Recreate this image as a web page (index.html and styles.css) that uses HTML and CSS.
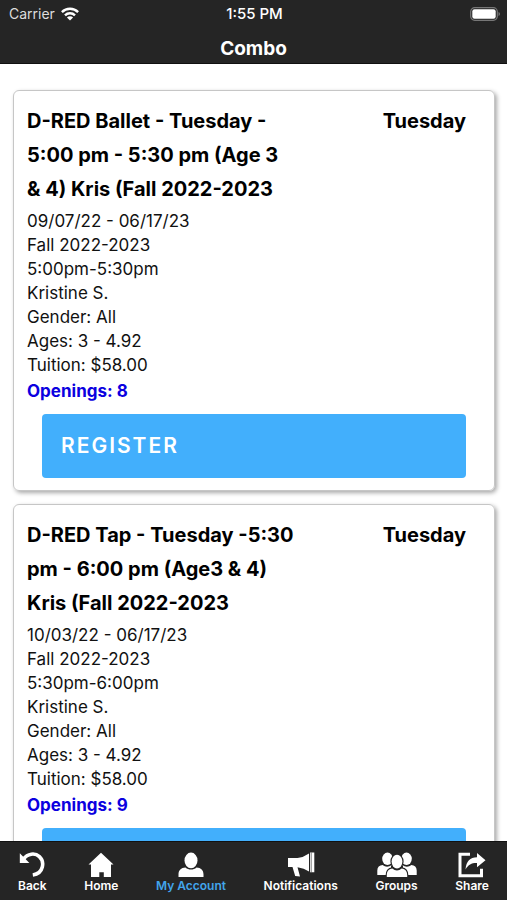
FILE: index.html
```html
<!DOCTYPE html>
<html lang="en">
<head>
<meta charset="utf-8">
<meta name="viewport" content="width=device-width, initial-scale=1">
<title>Combo</title>
<link rel="stylesheet" href="styles.css">
</head>
<body>
<header class="header">
  <div class="status">
    <div class="carrier">
      <span>Carrier</span>
      <svg width="18" height="14" viewBox="0 0 18 14" fill="none" stroke="#fff" stroke-width="2.4" aria-hidden="true">
        <path d="M.9 5.1a11.5 11.5 0 0 1 16.2 0M4 8.3a7 7 0 0 1 10 0"/>
        <path d="M9 13.6 5.9 10.5a4.4 4.4 0 0 1 6.2 0z" fill="#fff" stroke="none"/>
      </svg>
    </div>
    <time>1:55 PM</time>
    <svg class="battery" width="30" height="14" viewBox="0 0 30 14" aria-hidden="true">
      <rect x=".7" y=".7" width="26.6" height="12.6" rx="4" fill="none" stroke="#777" stroke-width="1.2"/>
      <rect x="2.3" y="2.3" width="23.4" height="9.4" rx="2.2" fill="#fff"/>
      <path d="M28.5 5q1.5.7 1.5 2t-1.500 2z" fill="#777"/>
    </svg>
  </div>
  <h1 class="title">Combo</h1>
</header>
<main class="list">
  <article class="card">
    <div class="card-head">
      <h2 class="name">D-RED Ballet - Tuesday - 5:00 pm - 5:30 pm (Age 3 &amp; 4) Kris (Fall 2022-2023</h2>
      <p class="day">Tuesday</p>
    </div>
    <ul class="details">
      <li>09/07/22 - 06/17/23</li>
      <li>Fall 2022-2023</li>
      <li>5:00pm-5:30pm</li>
      <li>Kristine S.</li>
      <li>Gender: All</li>
      <li>Ages: 3 - 4.92</li>
      <li>Tuition: $58.00</li>
      <li class="openings">Openings: 8</li>
    </ul>
    <button class="register" type="button">REGISTER</button>
  </article>
  <article class="card">
    <div class="card-head">
      <h2 class="name">D-RED Tap - Tuesday -5:30 pm - 6:00 pm (Age3 &amp; 4) Kris (Fall 2022-2023</h2>
      <p class="day">Tuesday</p>
    </div>
    <ul class="details">
      <li>10/03/22 - 06/17/23</li>
      <li>Fall 2022-2023</li>
      <li>5:30pm-6:00pm</li>
      <li>Kristine S.</li>
      <li>Gender: All</li>
      <li>Ages: 3 - 4.92</li>
      <li>Tuition: $58.00</li>
      <li class="openings">Openings: 9</li>
    </ul>
    <button class="register" type="button">REGISTER</button>
  </article>
</main>
<nav class="tabs" aria-label="Main">
  <a class="tab" href="#back">
    <svg width="26" height="26" viewBox="0 0 26 26" aria-hidden="true"><path d="M4.500 7.500C8.500 1.800 16 .9 20.400 5c5.300 4.900 4.600 16.800-6.600 18.400" transform="translate(0 -.4)" fill="none" stroke="#fff" stroke-width="3.600"/><path d="M.8 1.200v9.800h9.600z" fill="#fff"/></svg>
    <span>Back</span>
  </a>
  <a class="tab" href="#home">
    <svg width="26" height="26" viewBox="0 0 26 26" fill="#fff" aria-hidden="true"><path d="M13 .8 25.500 12.500h-2.500v12.500h-7.200v-4.800h-4.500V25H3V12.500H.5z"/></svg>
    <span>Home</span>
  </a>
  <a class="tab active" href="#account" aria-current="page">
    <svg width="26" height="26" viewBox="0 0 26 26" fill="#fff" aria-hidden="true"><ellipse cx="13" cy="8.400" rx="6.500" ry="7.800"/><path d="M.5 25v-2.500C.5 18 3 15.800 7.500 15.500c3 2.800 8 2.800 11 0 4.500.3 7 2.500 7 7V25z"/></svg>
    <span>My Account</span>
  </a>
  <a class="tab" href="#notifications">
    <svg width="28" height="26" viewBox="0 0 28 26" fill="#fff" aria-hidden="true"><path d="M1 6h9.500q6-.6 11.500-4.500v18Q17 16 10.500 15.200l2.500 9.300-4.800-.6L5.500 15H1zM23 .6h4.300v19.600H23z"/><path d="M24.200 .6v19.600" stroke="#252525" stroke-width=".6"/></svg>
    <span>Notifications</span>
  </a>
  <a class="tab" href="#groups">
    <svg width="40" height="26" viewBox="0 0 40 26" fill="#fff" aria-hidden="true"><g id="side"><ellipse cx="10.500" cy="6.800" rx="5.300" ry="6.200"/><path d="M.3 23v-4.500c0-3.500 2-5.300 5.500-5.600 2.500 2.300 6 2.300 8.700 0l5 2V23z"/></g><use href="#side" transform="matrix(-1 0 0 1 40 0)"/><path d="M14 14h12v5H14z" fill="#252525"/><g stroke="#252525" stroke-width="2.400" paint-order="stroke"><path d="M9.800 25v-1.500c0-4.500 2-6.500 5.500-7 3 2.500 6.400 2.500 9.400 0 3.500.5 5.500 2.500 5.500 7V25z"/><ellipse cx="20" cy="9.600" rx="5.400" ry="6.800"/></g></svg>
    <span>Groups</span>
  </a>
  <a class="tab" href="#share">
    <svg width="28" height="26" viewBox="0 0 28 26" aria-hidden="true"><path d="M12 2.200H2v21.600h21.500v-7" fill="none" stroke="#fff" stroke-width="3"/><path d="M7.500 17.500C8.300 9 12 5.500 19 5.200V1l8.500 7.200-8.500 7V11c-5.200-.2-8.500 1.500-11.500 6.500z" fill="#fff"/></svg>
    <span>Share</span>
  </a>
</nav>
</body>
</html>
```
FILE: styles.css
```css
* { box-sizing: border-box; }

body {
  display: flex;
  flex-direction: column;
  height: 100vh;
  margin: 0;
  background: #fff;
  color: #000;
  font-family: Inter, "Liberation Sans", sans-serif;
}

h1, h2, p, ul { margin: 0; padding: 0; }

.header {
  flex: none;
  background: #252525;
  color: #fff;
  border-bottom: 1px solid #111;
}

.status {
  display: grid;
  grid-template-columns: 1fr auto 1fr;
  align-items: center;
  height: 27px;
  padding: 0 7px 0 9px;
  font-size: 14px;
}

.status time {
  font-size: 15px;
  font-weight: 500;
}

.carrier {
  display: flex;
  align-items: center;
  gap: 6px;
  color: #ddd;
}

.battery { justify-self: end; }

.title {
  padding: 10px 0 2px;
  font-size: 19px;
  line-height: 24px;
  font-weight: 700;
  text-align: center;
}

.list {
  flex: 1;
  min-height: 0;
  overflow-y: auto;
  scrollbar-width: none;
  padding: 26px 12px 13px 13px;
}

.card {
  margin-bottom: 13px;
  padding: 13px 28px 12px 13px;
  border: 1px solid #c6c6c6;
  border-radius: 6px;
  box-shadow: 2px 2px 4px #aaa;
}

.card-head {
  display: flex;
  justify-content: space-between;
  gap: 24px;
  font-size: 20px;
  line-height: 34px;
  font-weight: 700;
}

.name {
  flex: 0 1 268px;
  font-size: inherit;
  font-weight: inherit;
}

.details {
  padding-top: 3px;
  font-size: 17px;
  line-height: 24px;
  list-style: none;
  color: #111;
}

.openings {
  margin-top: 2px;
  color: #0b00e0;
  font-weight: 700;
}

.register {
  display: block;
  width: calc(100% - 15px);
  margin: 11px 0 0 15px;
  padding: 16px 19px;
  border: 0;
  border-radius: 4px;
  background: #42affc;
  color: #fff;
  font: 600 21px/32px Inter, "Liberation Sans", sans-serif;
  letter-spacing: 2px;
  text-align: left;
}

.tabs {
  flex: none;
  display: flex;
  justify-content: space-between;
  padding: 10px 18px 6px;
  background: #252525;
  border-top: 1px solid #111;
}

.tab {
  display: flex;
  flex-direction: column;
  align-items: center;
  color: #fff;
  font-size: 12px;
  line-height: 16px;
  font-weight: 600;
  text-decoration: none;
}

.tab.active { color: #42a5ec; }
```
